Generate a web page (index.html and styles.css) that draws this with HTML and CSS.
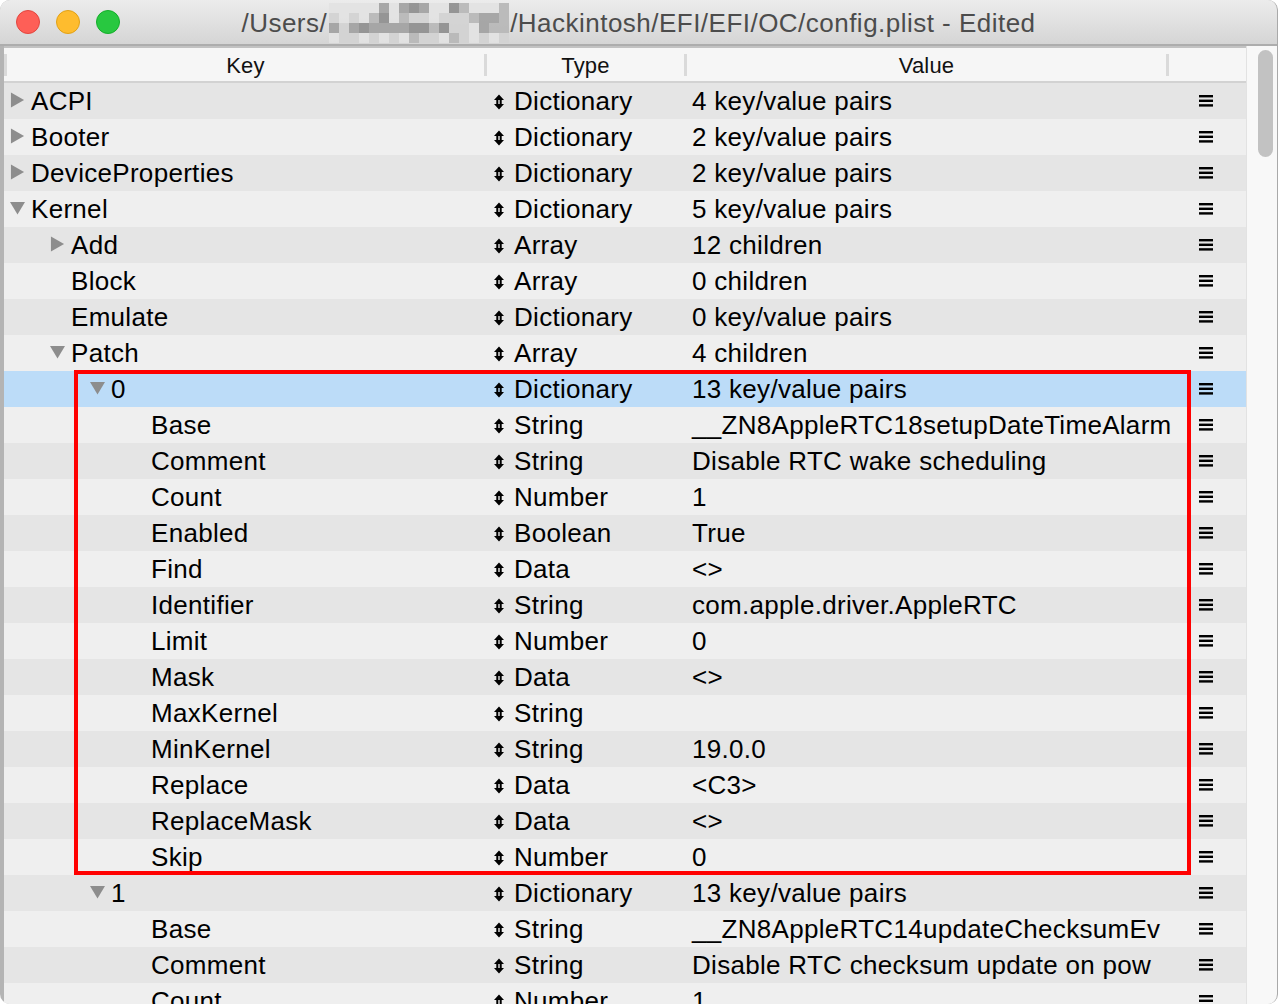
FILE: index.html
```html
<!DOCTYPE html>
<html>
<head>
<meta charset="utf-8">
<title>config.plist</title>
<link rel="stylesheet" href="styles.css">
</head>
<body>
<div class="window">
  <div class="titlebar">
    <div class="lights">
      <span class="light red"></span>
      <span class="light yellow"></span>
      <span class="light green"></span>
    </div>
    <div class="title">/Users/<span class="mosaic"><i class="c1"></i><i class="c1"></i><i class="c1"></i><i class="c1"></i><i class="c1"></i><i class="c4"></i><i class="c1"></i><i class="c4"></i><i class="c5"></i><i class="c4"></i><i class="c1"></i><i class="c1"></i><i class="c5"></i><i class="c3"></i><i class="c1"></i><i class="c1"></i><i class="c1"></i><i class="c3"></i><i class="c2"></i><i class="c1"></i><i class="c2"></i><i class="c1"></i><i class="c3"></i><i class="c5"></i><i class="c1"></i><i class="c3"></i><i class="c2"></i><i class="c2"></i><i class="c1"></i><i class="c2"></i><i class="c2"></i><i class="c2"></i><i class="c3"></i><i class="c4"></i><i class="c4"></i><i class="c3"></i><i class="c4"></i><i class="c2"></i><i class="c4"></i><i class="c5"></i><i class="c4"></i><i class="c4"></i><i class="c4"></i><i class="c4"></i><i class="c5"></i><i class="c5"></i><i class="c3"></i><i class="c5"></i><i class="c2"></i><i class="c2"></i><i class="c1"></i><i class="c4"></i><i class="c3"></i><i class="c3"></i><i class="c1"></i><i class="c2"></i><i class="c2"></i><i class="c1"></i><i class="c2"></i><i class="c1"></i><i class="c2"></i><i class="c1"></i><i class="c3"></i><i class="c2"></i><i class="c2"></i><i class="c1"></i><i class="c3"></i><i class="c2"></i><i class="c1"></i><i class="c2"></i><i class="c1"></i><i class="c2"></i></span>/Hackintosh/EFI/EFI/OC/config.plist - Edited</div>
    <div class="spacer"></div>
  </div>
  <div class="content">
    <div class="outline">
      <div class="header">
        <div class="hcell hkey">Key</div>
        <div class="hcell htype">Type</div>
        <div class="hcell hvalue">Value</div>
        <div class="hcell hmenu"></div>
      </div>
      <div class="rows">
        <div class="row">
          <div class="cell key lvl0"><svg class="disc" viewBox="0 0 16 16"><path d="M1 0 L15 8 L1 16 Z"/></svg><span>ACPI</span></div>
          <div class="cell type"><svg class="ud" viewBox="0 0 12 16"><path d="M6 0.5 L11 6 L1 6 Z M1 10 L11 10 L6 15.5 Z M3.3 5.5 H5.3 V10.5 H3.3 Z M6.7 5.5 H8.7 V10.5 H6.7 Z"/></svg>Dictionary</div>
          <div class="cell value">4 key/value pairs</div>
          <div class="cell menu"><svg class="burger" viewBox="0 0 14 12"><rect x="0" y="0" width="14" height="2.4"/><rect x="0" y="4.6" width="14" height="2.4"/><rect x="0" y="9.2" width="14" height="2.4"/></svg></div>
        </div>
        <div class="row">
          <div class="cell key lvl0"><svg class="disc" viewBox="0 0 16 16"><path d="M1 0 L15 8 L1 16 Z"/></svg><span>Booter</span></div>
          <div class="cell type"><svg class="ud" viewBox="0 0 12 16"><path d="M6 0.5 L11 6 L1 6 Z M1 10 L11 10 L6 15.5 Z M3.3 5.5 H5.3 V10.5 H3.3 Z M6.7 5.5 H8.7 V10.5 H6.7 Z"/></svg>Dictionary</div>
          <div class="cell value">2 key/value pairs</div>
          <div class="cell menu"><svg class="burger" viewBox="0 0 14 12"><rect x="0" y="0" width="14" height="2.4"/><rect x="0" y="4.6" width="14" height="2.4"/><rect x="0" y="9.2" width="14" height="2.4"/></svg></div>
        </div>
        <div class="row">
          <div class="cell key lvl0"><svg class="disc" viewBox="0 0 16 16"><path d="M1 0 L15 8 L1 16 Z"/></svg><span>DeviceProperties</span></div>
          <div class="cell type"><svg class="ud" viewBox="0 0 12 16"><path d="M6 0.5 L11 6 L1 6 Z M1 10 L11 10 L6 15.5 Z M3.3 5.5 H5.3 V10.5 H3.3 Z M6.7 5.5 H8.7 V10.5 H6.7 Z"/></svg>Dictionary</div>
          <div class="cell value">2 key/value pairs</div>
          <div class="cell menu"><svg class="burger" viewBox="0 0 14 12"><rect x="0" y="0" width="14" height="2.4"/><rect x="0" y="4.6" width="14" height="2.4"/><rect x="0" y="9.2" width="14" height="2.4"/></svg></div>
        </div>
        <div class="row">
          <div class="cell key lvl0"><svg class="disc" viewBox="0 0 16 16"><path d="M0 1.5 L16 1.5 L8 15 Z"/></svg><span>Kernel</span></div>
          <div class="cell type"><svg class="ud" viewBox="0 0 12 16"><path d="M6 0.5 L11 6 L1 6 Z M1 10 L11 10 L6 15.5 Z M3.3 5.5 H5.3 V10.5 H3.3 Z M6.7 5.5 H8.7 V10.5 H6.7 Z"/></svg>Dictionary</div>
          <div class="cell value">5 key/value pairs</div>
          <div class="cell menu"><svg class="burger" viewBox="0 0 14 12"><rect x="0" y="0" width="14" height="2.4"/><rect x="0" y="4.6" width="14" height="2.4"/><rect x="0" y="9.2" width="14" height="2.4"/></svg></div>
        </div>
        <div class="row">
          <div class="cell key lvl1"><svg class="disc" viewBox="0 0 16 16"><path d="M1 0 L15 8 L1 16 Z"/></svg><span>Add</span></div>
          <div class="cell type"><svg class="ud" viewBox="0 0 12 16"><path d="M6 0.5 L11 6 L1 6 Z M1 10 L11 10 L6 15.5 Z M3.3 5.5 H5.3 V10.5 H3.3 Z M6.7 5.5 H8.7 V10.5 H6.7 Z"/></svg>Array</div>
          <div class="cell value">12 children</div>
          <div class="cell menu"><svg class="burger" viewBox="0 0 14 12"><rect x="0" y="0" width="14" height="2.4"/><rect x="0" y="4.6" width="14" height="2.4"/><rect x="0" y="9.2" width="14" height="2.4"/></svg></div>
        </div>
        <div class="row">
          <div class="cell key lvl1"><span class="nodisc"></span><span>Block</span></div>
          <div class="cell type"><svg class="ud" viewBox="0 0 12 16"><path d="M6 0.5 L11 6 L1 6 Z M1 10 L11 10 L6 15.5 Z M3.3 5.5 H5.3 V10.5 H3.3 Z M6.7 5.5 H8.7 V10.5 H6.7 Z"/></svg>Array</div>
          <div class="cell value">0 children</div>
          <div class="cell menu"><svg class="burger" viewBox="0 0 14 12"><rect x="0" y="0" width="14" height="2.4"/><rect x="0" y="4.6" width="14" height="2.4"/><rect x="0" y="9.2" width="14" height="2.4"/></svg></div>
        </div>
        <div class="row">
          <div class="cell key lvl1"><span class="nodisc"></span><span>Emulate</span></div>
          <div class="cell type"><svg class="ud" viewBox="0 0 12 16"><path d="M6 0.5 L11 6 L1 6 Z M1 10 L11 10 L6 15.5 Z M3.3 5.5 H5.3 V10.5 H3.3 Z M6.7 5.5 H8.7 V10.5 H6.7 Z"/></svg>Dictionary</div>
          <div class="cell value">0 key/value pairs</div>
          <div class="cell menu"><svg class="burger" viewBox="0 0 14 12"><rect x="0" y="0" width="14" height="2.4"/><rect x="0" y="4.6" width="14" height="2.4"/><rect x="0" y="9.2" width="14" height="2.4"/></svg></div>
        </div>
        <div class="row">
          <div class="cell key lvl1"><svg class="disc" viewBox="0 0 16 16"><path d="M0 1.5 L16 1.5 L8 15 Z"/></svg><span>Patch</span></div>
          <div class="cell type"><svg class="ud" viewBox="0 0 12 16"><path d="M6 0.5 L11 6 L1 6 Z M1 10 L11 10 L6 15.5 Z M3.3 5.5 H5.3 V10.5 H3.3 Z M6.7 5.5 H8.7 V10.5 H6.7 Z"/></svg>Array</div>
          <div class="cell value">4 children</div>
          <div class="cell menu"><svg class="burger" viewBox="0 0 14 12"><rect x="0" y="0" width="14" height="2.4"/><rect x="0" y="4.6" width="14" height="2.4"/><rect x="0" y="9.2" width="14" height="2.4"/></svg></div>
        </div>
        <div class="row selected">
          <div class="cell key lvl2"><svg class="disc" viewBox="0 0 16 16"><path d="M0 1.5 L16 1.5 L8 15 Z"/></svg><span>0</span></div>
          <div class="cell type"><svg class="ud" viewBox="0 0 12 16"><path d="M6 0.5 L11 6 L1 6 Z M1 10 L11 10 L6 15.5 Z M3.3 5.5 H5.3 V10.5 H3.3 Z M6.7 5.5 H8.7 V10.5 H6.7 Z"/></svg>Dictionary</div>
          <div class="cell value">13 key/value pairs</div>
          <div class="cell menu"><svg class="burger" viewBox="0 0 14 12"><rect x="0" y="0" width="14" height="2.4"/><rect x="0" y="4.6" width="14" height="2.4"/><rect x="0" y="9.2" width="14" height="2.4"/></svg></div>
        </div>
        <div class="row">
          <div class="cell key lvl3"><span class="nodisc"></span><span>Base</span></div>
          <div class="cell type"><svg class="ud" viewBox="0 0 12 16"><path d="M6 0.5 L11 6 L1 6 Z M1 10 L11 10 L6 15.5 Z M3.3 5.5 H5.3 V10.5 H3.3 Z M6.7 5.5 H8.7 V10.5 H6.7 Z"/></svg>String</div>
          <div class="cell value">__ZN8AppleRTC18setupDateTimeAlarm</div>
          <div class="cell menu"><svg class="burger" viewBox="0 0 14 12"><rect x="0" y="0" width="14" height="2.4"/><rect x="0" y="4.6" width="14" height="2.4"/><rect x="0" y="9.2" width="14" height="2.4"/></svg></div>
        </div>
        <div class="row">
          <div class="cell key lvl3"><span class="nodisc"></span><span>Comment</span></div>
          <div class="cell type"><svg class="ud" viewBox="0 0 12 16"><path d="M6 0.5 L11 6 L1 6 Z M1 10 L11 10 L6 15.5 Z M3.3 5.5 H5.3 V10.5 H3.3 Z M6.7 5.5 H8.7 V10.5 H6.7 Z"/></svg>String</div>
          <div class="cell value">Disable RTC wake scheduling</div>
          <div class="cell menu"><svg class="burger" viewBox="0 0 14 12"><rect x="0" y="0" width="14" height="2.4"/><rect x="0" y="4.6" width="14" height="2.4"/><rect x="0" y="9.2" width="14" height="2.4"/></svg></div>
        </div>
        <div class="row">
          <div class="cell key lvl3"><span class="nodisc"></span><span>Count</span></div>
          <div class="cell type"><svg class="ud" viewBox="0 0 12 16"><path d="M6 0.5 L11 6 L1 6 Z M1 10 L11 10 L6 15.5 Z M3.3 5.5 H5.3 V10.5 H3.3 Z M6.7 5.5 H8.7 V10.5 H6.7 Z"/></svg>Number</div>
          <div class="cell value">1</div>
          <div class="cell menu"><svg class="burger" viewBox="0 0 14 12"><rect x="0" y="0" width="14" height="2.4"/><rect x="0" y="4.6" width="14" height="2.4"/><rect x="0" y="9.2" width="14" height="2.4"/></svg></div>
        </div>
        <div class="row">
          <div class="cell key lvl3"><span class="nodisc"></span><span>Enabled</span></div>
          <div class="cell type"><svg class="ud" viewBox="0 0 12 16"><path d="M6 0.5 L11 6 L1 6 Z M1 10 L11 10 L6 15.5 Z M3.3 5.5 H5.3 V10.5 H3.3 Z M6.7 5.5 H8.7 V10.5 H6.7 Z"/></svg>Boolean</div>
          <div class="cell value">True</div>
          <div class="cell menu"><svg class="burger" viewBox="0 0 14 12"><rect x="0" y="0" width="14" height="2.4"/><rect x="0" y="4.6" width="14" height="2.4"/><rect x="0" y="9.2" width="14" height="2.4"/></svg></div>
        </div>
        <div class="row">
          <div class="cell key lvl3"><span class="nodisc"></span><span>Find</span></div>
          <div class="cell type"><svg class="ud" viewBox="0 0 12 16"><path d="M6 0.5 L11 6 L1 6 Z M1 10 L11 10 L6 15.5 Z M3.3 5.5 H5.3 V10.5 H3.3 Z M6.7 5.5 H8.7 V10.5 H6.7 Z"/></svg>Data</div>
          <div class="cell value">&lt;&gt;</div>
          <div class="cell menu"><svg class="burger" viewBox="0 0 14 12"><rect x="0" y="0" width="14" height="2.4"/><rect x="0" y="4.6" width="14" height="2.4"/><rect x="0" y="9.2" width="14" height="2.4"/></svg></div>
        </div>
        <div class="row">
          <div class="cell key lvl3"><span class="nodisc"></span><span>Identifier</span></div>
          <div class="cell type"><svg class="ud" viewBox="0 0 12 16"><path d="M6 0.5 L11 6 L1 6 Z M1 10 L11 10 L6 15.5 Z M3.3 5.5 H5.3 V10.5 H3.3 Z M6.7 5.5 H8.7 V10.5 H6.7 Z"/></svg>String</div>
          <div class="cell value">com.apple.driver.AppleRTC</div>
          <div class="cell menu"><svg class="burger" viewBox="0 0 14 12"><rect x="0" y="0" width="14" height="2.4"/><rect x="0" y="4.6" width="14" height="2.4"/><rect x="0" y="9.2" width="14" height="2.4"/></svg></div>
        </div>
        <div class="row">
          <div class="cell key lvl3"><span class="nodisc"></span><span>Limit</span></div>
          <div class="cell type"><svg class="ud" viewBox="0 0 12 16"><path d="M6 0.5 L11 6 L1 6 Z M1 10 L11 10 L6 15.5 Z M3.3 5.5 H5.3 V10.5 H3.3 Z M6.7 5.5 H8.7 V10.5 H6.7 Z"/></svg>Number</div>
          <div class="cell value">0</div>
          <div class="cell menu"><svg class="burger" viewBox="0 0 14 12"><rect x="0" y="0" width="14" height="2.4"/><rect x="0" y="4.6" width="14" height="2.4"/><rect x="0" y="9.2" width="14" height="2.4"/></svg></div>
        </div>
        <div class="row">
          <div class="cell key lvl3"><span class="nodisc"></span><span>Mask</span></div>
          <div class="cell type"><svg class="ud" viewBox="0 0 12 16"><path d="M6 0.5 L11 6 L1 6 Z M1 10 L11 10 L6 15.5 Z M3.3 5.5 H5.3 V10.5 H3.3 Z M6.7 5.5 H8.7 V10.5 H6.7 Z"/></svg>Data</div>
          <div class="cell value">&lt;&gt;</div>
          <div class="cell menu"><svg class="burger" viewBox="0 0 14 12"><rect x="0" y="0" width="14" height="2.4"/><rect x="0" y="4.6" width="14" height="2.4"/><rect x="0" y="9.2" width="14" height="2.4"/></svg></div>
        </div>
        <div class="row">
          <div class="cell key lvl3"><span class="nodisc"></span><span>MaxKernel</span></div>
          <div class="cell type"><svg class="ud" viewBox="0 0 12 16"><path d="M6 0.5 L11 6 L1 6 Z M1 10 L11 10 L6 15.5 Z M3.3 5.5 H5.3 V10.5 H3.3 Z M6.7 5.5 H8.7 V10.5 H6.7 Z"/></svg>String</div>
          <div class="cell value"></div>
          <div class="cell menu"><svg class="burger" viewBox="0 0 14 12"><rect x="0" y="0" width="14" height="2.4"/><rect x="0" y="4.6" width="14" height="2.4"/><rect x="0" y="9.2" width="14" height="2.4"/></svg></div>
        </div>
        <div class="row">
          <div class="cell key lvl3"><span class="nodisc"></span><span>MinKernel</span></div>
          <div class="cell type"><svg class="ud" viewBox="0 0 12 16"><path d="M6 0.5 L11 6 L1 6 Z M1 10 L11 10 L6 15.5 Z M3.3 5.5 H5.3 V10.5 H3.3 Z M6.7 5.5 H8.7 V10.5 H6.7 Z"/></svg>String</div>
          <div class="cell value">19.0.0</div>
          <div class="cell menu"><svg class="burger" viewBox="0 0 14 12"><rect x="0" y="0" width="14" height="2.4"/><rect x="0" y="4.6" width="14" height="2.4"/><rect x="0" y="9.2" width="14" height="2.4"/></svg></div>
        </div>
        <div class="row">
          <div class="cell key lvl3"><span class="nodisc"></span><span>Replace</span></div>
          <div class="cell type"><svg class="ud" viewBox="0 0 12 16"><path d="M6 0.5 L11 6 L1 6 Z M1 10 L11 10 L6 15.5 Z M3.3 5.5 H5.3 V10.5 H3.3 Z M6.7 5.5 H8.7 V10.5 H6.7 Z"/></svg>Data</div>
          <div class="cell value">&lt;C3&gt;</div>
          <div class="cell menu"><svg class="burger" viewBox="0 0 14 12"><rect x="0" y="0" width="14" height="2.4"/><rect x="0" y="4.6" width="14" height="2.4"/><rect x="0" y="9.2" width="14" height="2.4"/></svg></div>
        </div>
        <div class="row">
          <div class="cell key lvl3"><span class="nodisc"></span><span>ReplaceMask</span></div>
          <div class="cell type"><svg class="ud" viewBox="0 0 12 16"><path d="M6 0.5 L11 6 L1 6 Z M1 10 L11 10 L6 15.5 Z M3.3 5.5 H5.3 V10.5 H3.3 Z M6.7 5.5 H8.7 V10.5 H6.7 Z"/></svg>Data</div>
          <div class="cell value">&lt;&gt;</div>
          <div class="cell menu"><svg class="burger" viewBox="0 0 14 12"><rect x="0" y="0" width="14" height="2.4"/><rect x="0" y="4.6" width="14" height="2.4"/><rect x="0" y="9.2" width="14" height="2.4"/></svg></div>
        </div>
        <div class="row">
          <div class="cell key lvl3"><span class="nodisc"></span><span>Skip</span></div>
          <div class="cell type"><svg class="ud" viewBox="0 0 12 16"><path d="M6 0.5 L11 6 L1 6 Z M1 10 L11 10 L6 15.5 Z M3.3 5.5 H5.3 V10.5 H3.3 Z M6.7 5.5 H8.7 V10.5 H6.7 Z"/></svg>Number</div>
          <div class="cell value">0</div>
          <div class="cell menu"><svg class="burger" viewBox="0 0 14 12"><rect x="0" y="0" width="14" height="2.4"/><rect x="0" y="4.6" width="14" height="2.4"/><rect x="0" y="9.2" width="14" height="2.4"/></svg></div>
        </div>
        <div class="row">
          <div class="cell key lvl2"><svg class="disc" viewBox="0 0 16 16"><path d="M0 1.5 L16 1.5 L8 15 Z"/></svg><span>1</span></div>
          <div class="cell type"><svg class="ud" viewBox="0 0 12 16"><path d="M6 0.5 L11 6 L1 6 Z M1 10 L11 10 L6 15.5 Z M3.3 5.5 H5.3 V10.5 H3.3 Z M6.7 5.5 H8.7 V10.5 H6.7 Z"/></svg>Dictionary</div>
          <div class="cell value">13 key/value pairs</div>
          <div class="cell menu"><svg class="burger" viewBox="0 0 14 12"><rect x="0" y="0" width="14" height="2.4"/><rect x="0" y="4.6" width="14" height="2.4"/><rect x="0" y="9.2" width="14" height="2.4"/></svg></div>
        </div>
        <div class="row">
          <div class="cell key lvl3"><span class="nodisc"></span><span>Base</span></div>
          <div class="cell type"><svg class="ud" viewBox="0 0 12 16"><path d="M6 0.5 L11 6 L1 6 Z M1 10 L11 10 L6 15.5 Z M3.3 5.5 H5.3 V10.5 H3.3 Z M6.7 5.5 H8.7 V10.5 H6.7 Z"/></svg>String</div>
          <div class="cell value">__ZN8AppleRTC14updateChecksumEv</div>
          <div class="cell menu"><svg class="burger" viewBox="0 0 14 12"><rect x="0" y="0" width="14" height="2.4"/><rect x="0" y="4.6" width="14" height="2.4"/><rect x="0" y="9.2" width="14" height="2.4"/></svg></div>
        </div>
        <div class="row">
          <div class="cell key lvl3"><span class="nodisc"></span><span>Comment</span></div>
          <div class="cell type"><svg class="ud" viewBox="0 0 12 16"><path d="M6 0.5 L11 6 L1 6 Z M1 10 L11 10 L6 15.5 Z M3.3 5.5 H5.3 V10.5 H3.3 Z M6.7 5.5 H8.7 V10.5 H6.7 Z"/></svg>String</div>
          <div class="cell value">Disable RTC checksum update on pow</div>
          <div class="cell menu"><svg class="burger" viewBox="0 0 14 12"><rect x="0" y="0" width="14" height="2.4"/><rect x="0" y="4.6" width="14" height="2.4"/><rect x="0" y="9.2" width="14" height="2.4"/></svg></div>
        </div>
        <div class="row">
          <div class="cell key lvl3"><span class="nodisc"></span><span>Count</span></div>
          <div class="cell type"><svg class="ud" viewBox="0 0 12 16"><path d="M6 0.5 L11 6 L1 6 Z M1 10 L11 10 L6 15.5 Z M3.3 5.5 H5.3 V10.5 H3.3 Z M6.7 5.5 H8.7 V10.5 H6.7 Z"/></svg>Number</div>
          <div class="cell value">1</div>
          <div class="cell menu"><svg class="burger" viewBox="0 0 14 12"><rect x="0" y="0" width="14" height="2.4"/><rect x="0" y="4.6" width="14" height="2.4"/><rect x="0" y="9.2" width="14" height="2.4"/></svg></div>
        </div>
        <div class="annotation"></div>
      </div>
    </div>
    <div class="scrollbar"><div class="thumb"></div></div>
  </div>
</div>
</body>
</html>
```

FILE: styles.css
```css
* { box-sizing: border-box; }
html, body { margin: 0; padding: 0; }
body {
  width: 1280px;
  height: 1004px;
  overflow: hidden;
  background: #ffffff;
  font-family: "Liberation Sans", Arial, sans-serif;
}
.window {
  width: 1278px;
  height: 1004px;
  border-radius: 10px;
  overflow: hidden;
  background: #b4b4b4;
  display: flex;
  flex-direction: column;
  border-right: 1px solid #a9a9a9;
}
.titlebar {
  height: 46px;
  flex: none;
  display: grid;
  grid-template-columns: 1fr auto 1fr;
  align-items: center;
  background: linear-gradient(#ececec, #d5d5d5);
  border-bottom: 2px solid #adadad;
}
.lights {
  display: flex;
  gap: 16px;
  padding-left: 16px;
}
.light {
  width: 24px;
  height: 24px;
  border-radius: 50%;
  display: block;
}
.red { background: #fe5f57; border: 1px solid #e2463f; }
.yellow { background: #febc2e; border: 1px solid #e1a116; }
.green { background: #28c840; border: 1px solid #14ae2a; }
.title {
  font-size: 26px;
  color: #4c4c4c;
  letter-spacing: 0.48px;
  white-space: nowrap;
  display: flex;
  align-items: center;
  height: 44px;
  padding-top: 3px;
}
.mosaic {
  display: grid;
  grid-template-columns: repeat(18, 10px);
  grid-template-rows: repeat(4, 10px);
  width: 180px;
  height: 40px;
  margin: -2px 1px 0 2px;
  opacity: 0.92;
}
.mosaic i { display: block; }
.c1 { background: #e3e3e3; }
.c2 { background: #d3d3d3; }
.c3 { background: #b8b8b8; }
.c4 { background: #a2a2a2; }
.c5 { background: #8f8f8f; }
.content {
  flex: 1;
  display: flex;
  min-height: 0;
}
.outline {
  width: 1242px;
  margin-left: 4px;
  display: flex;
  flex-direction: column;
  border-top: 2px solid #c2c2c2;
  background: #efefef;
}
.header {
  height: 35px;
  flex: none;
  display: flex;
  background: #f6f6f6;
  border-bottom: 2px solid #d2d2d2;
  font-size: 22px;
  color: #111;
  letter-spacing: 0.2px;
}
.hcell {
  position: relative;
  display: flex;
  align-items: center;
  justify-content: center;
  border-left: 3px solid transparent;
  padding-top: 3px;
}
.hcell::before {
  content: "";
  position: absolute;
  left: -3px;
  top: 6px;
  width: 3px;
  height: 22px;
  background: #dadada;
}
.hkey { width: 480px; }
.htype { width: 200px; }
.hvalue { width: 482px; }
.hmenu { width: 80px; }
.rows {
  position: relative;
  flex: 1;
  overflow: hidden;
}
.row {
  height: 36px;
  display: flex;
  align-items: center;
  font-size: 26px;
  letter-spacing: 0.3px;
  color: #000;
  background: #e5e5e5;
}
.row:nth-child(even) { background: #efefef; }
.row.selected { background: #bcdcf8; }
.cell {
  height: 36px;
  display: flex;
  align-items: center;
  white-space: nowrap;
  overflow: hidden;
}
.key { width: 480px; }
.lvl0 { padding-left: 6px; }
.lvl1 { padding-left: 46px; }
.lvl2 { padding-left: 86px; }
.lvl3 { padding-left: 126px; }
.disc {
  width: 15px;
  height: 16px;
  fill: #8d8d8d;
  flex: none;
  margin-right: 6px;
  margin-top: -3px;
}
.nodisc { width: 15px; margin-right: 6px; flex: none; }
.type { width: 200px; padding-left: 9px; }
.ud {
  width: 12px;
  height: 16px;
  flex: none;
  margin-right: 9px;
  fill: #000;
  margin-top: 1px;
}
.value { width: 482px; padding-left: 8px; overflow: visible; }
.menu { width: 80px; justify-content: center; }
.burger { width: 14px; height: 12px; fill: #000; }
.annotation {
  position: absolute;
  left: 70px;
  top: 287px;
  width: 1117px;
  height: 505px;
  border: 4px solid #ff0000;
  pointer-events: none;
}
.scrollbar {
  width: 31px;
  flex: none;
  background: #f8f8f8;
  border-left: 1px solid #e2e2e2;
  padding: 4px 0 0 11px;
}
.thumb {
  width: 15px;
  height: 107px;
  border-radius: 8px;
  background: #c2c2c2;
}
```
